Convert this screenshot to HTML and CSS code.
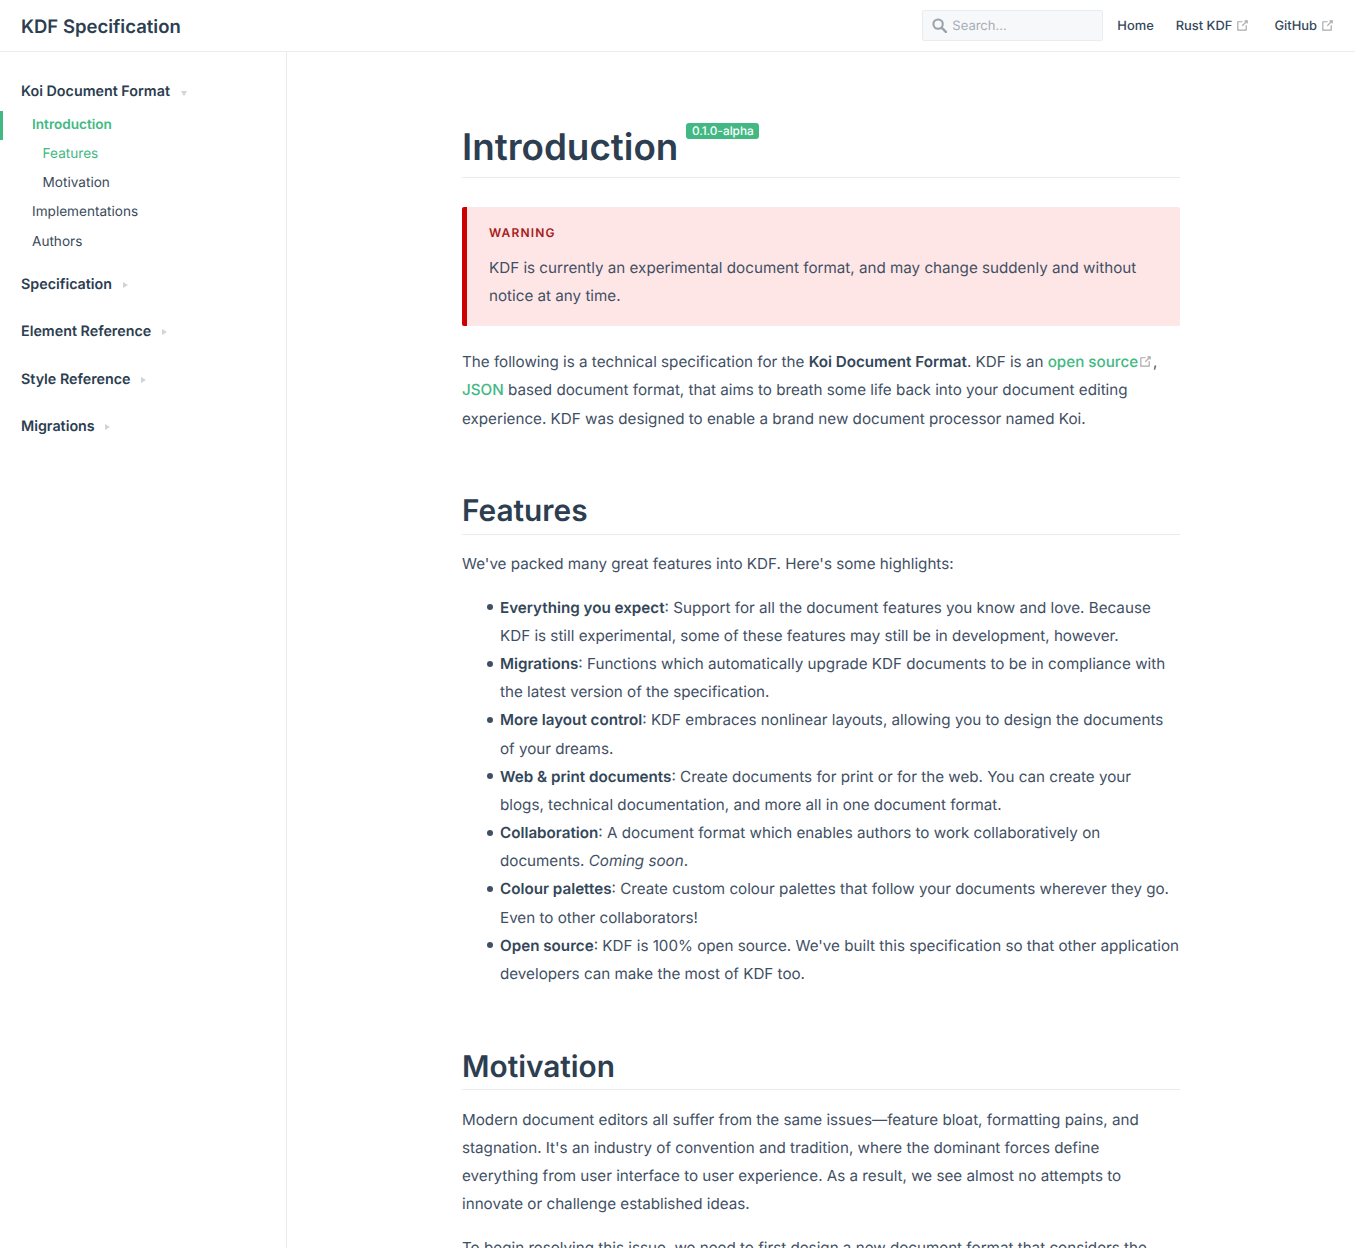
FILE: index.html
```html
<!DOCTYPE html>
<html lang="en">
<head>
<meta charset="utf-8">
<title>KDF Specification</title>
<link rel="stylesheet" href="styles.css">
</head>
<body>
<svg class="defs" width="0" height="0" aria-hidden="true"><defs>
<symbol id="ext" viewBox="0 0 100 100"><path fill="currentColor" d="M18.8,85.1h56l0,0c2.2,0,4-1.8,4-4v-32h-8v28h-48v-48h28v-8h-32l0,0c-2.2,0-4,1.8-4,4v56C14.8,83.3,16.6,85.1,18.8,85.1z"/><polygon fill="currentColor" points="45.7,48.7 51.3,54.3 77.2,28.5 77.2,37.2 85.2,37.2 85.2,14.9 62.8,14.9 62.8,22.9 71.5,22.9"/></symbol>
</defs></svg>
<header class="navbar">
  <a class="brand">KDF Specification</a>
  <nav class="nav">
    <div class="search">
      <svg class="search-icon" viewBox="0 0 16 16" aria-hidden="true"><circle cx="6.5" cy="6.5" r="5" fill="none" stroke="currentColor" stroke-width="2.2"/><path d="M10.5 10.5 14.8 14.8" stroke="currentColor" stroke-width="2.6" stroke-linecap="round"/></svg>
      <span>Search...</span>
    </div>
    <a class="nav-link">Home</a>
    <a class="nav-link">Rust KDF<svg class="ext"><use href="#ext"/></svg></a>
    <a class="nav-link">GitHub<svg class="ext"><use href="#ext"/></svg></a>
  </nav>
</header>
<div class="layout">
  <aside class="sidebar">
    <section class="group open">
      <p class="group-title">Koi Document Format <i class="arrow down"></i></p>
      <ul class="links">
        <li><a class="active lvl1">Introduction</a></li>
        <li><a class="sub current">Features</a></li>
        <li><a class="sub">Motivation</a></li>
        <li><a class="lvl1">Implementations</a></li>
        <li><a class="lvl1">Authors</a></li>
      </ul>
    </section>
    <section class="group"><p class="group-title">Specification <i class="arrow right"></i></p></section>
    <section class="group"><p class="group-title">Element Reference <i class="arrow right"></i></p></section>
    <section class="group"><p class="group-title">Style Reference <i class="arrow right"></i></p></section>
    <section class="group"><p class="group-title">Migrations <i class="arrow right"></i></p></section>
  </aside>
  <main class="content">
    <h1>Introduction <span class="badge">0.1.0-alpha</span></h1>
    <div class="warning">
      <p class="warning-title">WARNING</p>
      <p>KDF is currently an experimental document format, and may change suddenly and without notice at any time.</p>
    </div>
    <p>The following is a technical specification for the <strong>Koi Document Format</strong>. KDF is an <a class="link">open source<svg class="ext inline"><use href="#ext"/></svg></a>, <a class="link">JSON</a> based document format, that aims to breath some life back into your document editing experience. KDF was designed to enable a brand new document processor named Koi.</p>
    <h2>Features</h2>
    <p>We've packed many great features into KDF. Here's some highlights:</p>
    <ul class="features">
      <li><strong>Everything you expect</strong>: Support for all the document features you know and love. Because KDF is still experimental, some of these features may still be in development, however.</li>
      <li><strong>Migrations</strong>: Functions which automatically upgrade KDF documents to be in compliance with the latest version of the specification.</li>
      <li><strong>More layout control</strong>: KDF embraces nonlinear layouts, allowing you to design the documents of your dreams.</li>
      <li><strong>Web &amp; print documents</strong>: Create documents for print or for the web. You can create your blogs,&nbsp;technical documentation, and more all in one document format.</li>
      <li><strong>Collaboration</strong>: A document format which enables authors to work collaboratively on documents. <em>Coming soon</em>.</li>
      <li><strong>Colour palettes</strong>: Create custom colour palettes that follow your documents wherever they go. Even to other collaborators!</li>
      <li><strong>Open source</strong>: KDF is 100% open source. We've built this specification so that other application developers can make the most of KDF too.</li>
    </ul>
    <h2>Motivation</h2>
    <p>Modern document editors all suffer from the same issues—feature bloat, formatting pains, and stagnation. It's an industry of convention and tradition, where the dominant forces define everything&nbsp;from user interface to user experience. As a result, we see almost no attempts to innovate or challenge established ideas.</p>
    <p>To begin resolving this issue, we need to first design a new document format that considers the</p>
  </main>
</div>
</body>
</html>
```
FILE: styles.css
```css
* { box-sizing: border-box; }
html, body { margin: 0; height: 1248px; overflow: hidden; }
body { font-family: Inter, "Liberation Sans", sans-serif; font-size: 15.2px; color: #2c3e50; background: #fff; text-rendering: geometricPrecision; }
.defs { position: absolute; }
.navbar { height: 52px; display: flex; align-items: center; justify-content: space-between; padding: 0 18px 0 21px; border-bottom: 1px solid #eaecef; }
.brand { font-size: 18.5px; font-weight: 600; color: #2c3e50; line-height: 22px; padding-top: 3px; }
.nav { display: flex; align-items: center; line-height: 16px; }
.search { width: 181px; height: 31px; display: flex; align-items: center; gap: 5px; padding: 0 0 0 9px; margin-right: 14px; background: #f6f8fa; border: 1px solid #eaecef; border-radius: 2px; color: #a6adb5; font-size: 13px; }
.search-icon { width: 15px; height: 15px; color: #9aa3ad; }
.nav-link { font-size: 12.9px; font-weight: 500; color: #34475a; margin-right: 22px; padding-top: 2px; white-space: nowrap; }
.nav-link:last-child { margin-right: 0; }
.ext { width: 15px; height: 15px; color: #aaa; vertical-align: -3px; margin-left: 3px; margin-right: 2px; }
.ext.inline { width: 15px; height: 15px; vertical-align: -2px; margin: 0; }
.layout { display: flex; height: 1196px; }
.sidebar { width: 287px; flex: none; border-right: 1px solid #eaecef; padding-top: 30px; }
.group { margin-bottom: 27.4px; }
.group-title { margin: 0; padding-left: 21px; font-size: 14.3px; font-weight: 600; line-height: 20px; height: 20px; color: #2c3e50; }
.arrow { display: inline-block; width: 0; height: 0; margin-left: 7px; vertical-align: 1px; }
.arrow.down { border-left: 3px solid transparent; border-right: 3px solid transparent; border-top: 5px solid #cfd4db; vertical-align: 0; }
.arrow.right { border-top: 3px solid transparent; border-bottom: 3px solid transparent; border-left: 5px solid #cfd4db; }
.links { list-style: none; margin: 8.8px 0 -9.2px; padding: 0; }
.links a { display: block; height: 29.2px; line-height: 29px; font-size: 13.6px; color: #3a4a5c; border-left: 3px solid transparent; }
.lvl1 { padding-left: 29px; }
.sub { padding-left: 39.6px; }
.links .active { color: #42b983; font-weight: 600; border-left-color: #42b983; }
.links .current { color: #42b983; }
.content { width: 718px; margin-left: 175px; flex: none; padding-top: 56px; font-size: 15.2px; line-height: 28.16px; color: #3f5064; }
h1, h2 { color: #2c3e50; font-weight: 600; margin: 0; border-bottom: 1px solid #eaecef; }
h1 { font-size: 36.8px; line-height: 46px; padding: 16px 0 7px; margin-bottom: 29px; display: flex; align-items: flex-start; gap: 8px; height: 70px; }
.badge { font-size: 11.8px; line-height: 16px; font-weight: 500; color: #fff; background: #42b983; border-radius: 3px; padding: 0 5.5px; margin-top: -1px; }
h2 { font-size: 29.8px; line-height: 38px; height: 44.4px; margin-top: 58px; margin-bottom: 15px; padding-top: 1px; }
.features + h2 { padding-top: 2px; margin-bottom: 15.4px; }
p { margin: 0 0 15.5px; }
strong { font-weight: 600; color: #34475a; }
.warning { background: #ffe6e6; border-left: 5px solid #c00; border-radius: 2px; padding: 11px 22px 16px; margin-bottom: 22.3px; height: 119px; }
.warning p { margin: 0; }
.warning .warning-title { font-size: 12px; font-weight: 600; letter-spacing: 1.15px; color: #a61b1b; line-height: 30px; margin-bottom: 6px; }
.link { color: #42b983; font-weight: 500; }
.features { margin: 0; padding-left: 38px; list-style: none; }
.features li { position: relative; }
.features li::before { content: ""; position: absolute; left: -13.5px; top: 10.5px; width: 6px; height: 6px; border-radius: 50%; background: #3f5064; }
```
